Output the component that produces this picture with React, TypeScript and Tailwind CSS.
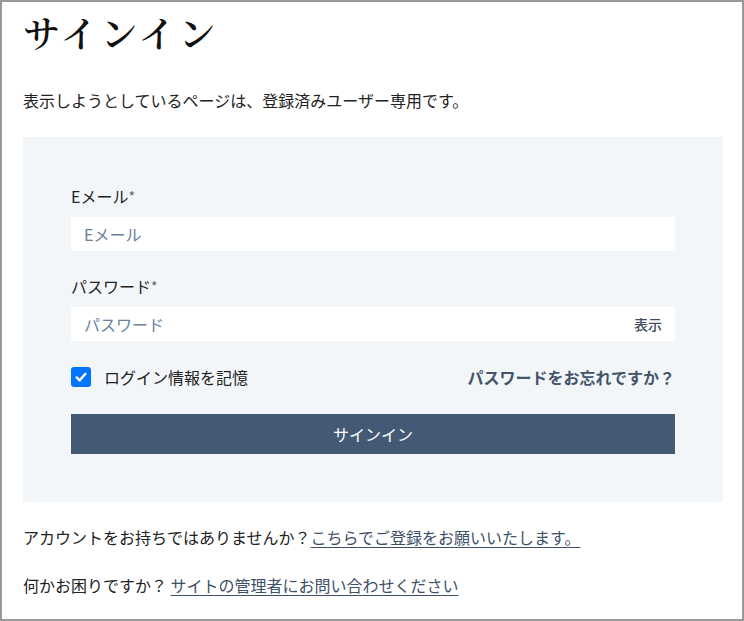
import { useState } from 'react'

// サインイン画面：登録ユーザー専用ページの入口。
function Field({
  label,
  placeholder,
  type = 'text',
  trailing,
}: {
  label: string
  placeholder: string
  type?: string
  trailing?: React.ReactNode
}) {
  return (
    <div className="flex flex-col">
      <label className="text-[16px] leading-[24px] text-[#222]">
        {label}
        <span className="text-[#666] text-[14px] align-top">*</span>
      </label>
      <div className="mt-[9px] flex h-[34px] items-center bg-white">
        <input
          type={type}
          placeholder={placeholder}
          className="h-full min-w-0 flex-1 bg-transparent pl-[13px] text-[16px] text-[#222] outline-none placeholder:text-[#6a819c]"
        />
        {trailing}
      </div>
    </div>
  )
}

export default function App() {
  const [remember, setRemember] = useState(true)
  const [show, setShow] = useState(false)

  return (
    <div className="h-[621px] overflow-hidden border-2 border-[#9a9a9a] bg-white pl-[21px] pr-[19px] font-['Noto_Sans_CJK_JP',sans-serif] text-[#222]">
      <h1 className="mt-[8px] font-['Noto_Serif_CJK_JP','Liberation_Serif',serif] text-[37px] font-semibold leading-[44px] tracking-[3px] text-[#111]">
        サインイン
      </h1>
      <p className="mt-[34px] text-[16px] leading-[24px]">
        表示しようとしているページは、登録済みユーザー専用です。
      </p>

      <div className="mt-[25px] bg-[#f3f6f9] px-[48px] pb-[48px] pt-[47px]">
        <Field label="Eメール" placeholder="Eメール" />
        <div className="mt-[23px]">
          <Field
            label="パスワード"
            placeholder="パスワード"
            type={show ? 'text' : 'password'}
            trailing={
              <button
                type="button"
                onClick={() => setShow(!show)}
                className="pr-[13px] text-[14px] font-medium text-[#3f4c5e]"
              >
                表示
              </button>
            }
          />
        </div>

        <div className="mt-[24px] flex h-[24px] items-center justify-between">
          <label className="flex cursor-pointer items-center gap-[13px] text-[16px] leading-[24px]">
            <span
              onClick={() => setRemember(!remember)}
              className={
                remember
                  ? 'flex h-[20px] w-[20px] items-center justify-center rounded-[3px] bg-[#0075ff]'
                  : 'flex h-[20px] w-[20px] items-center justify-center rounded-[3px] border-2 border-[#767676] bg-white'
              }
            >
              {remember ? (
                <svg viewBox="0 0 20 20" className="h-[16px] w-[16px]">
                  <path
                    d="M4.5 10.5 L8.3 14.2 L15.5 6"
                    fill="none"
                    stroke="white"
                    strokeWidth="3"
                    strokeLinecap="round"
                    strokeLinejoin="round"
                  />
                </svg>
              ) : null}
            </span>
            ログイン情報を記憶
          </label>
          <a href="#" className="text-[16px] font-bold leading-[24px] text-[#44546a]">
            パスワードをお忘れですか？
          </a>
        </div>

        <button
          type="button"
          className="mt-[25px] h-[40px] w-full bg-[#445a74] text-[16px] text-white"
        >
          サインイン
        </button>
      </div>

      <p className="mt-[23px] text-[16px] leading-[24px]">
        アカウントをお持ちではありませんか？
        <a href="#" className="text-[#3e5068] underline underline-offset-[3px]">
          こちらでご登録をお願いいたします。
        </a>
      </p>
      <p className="mt-[24px] text-[16px] leading-[24px]">
        何かお困りですか？{' '}
        <a href="#" className="text-[#3e5068] underline underline-offset-[3px]">
          サイトの管理者にお問い合わせください
        </a>
      </p>
    </div>
  )
}
